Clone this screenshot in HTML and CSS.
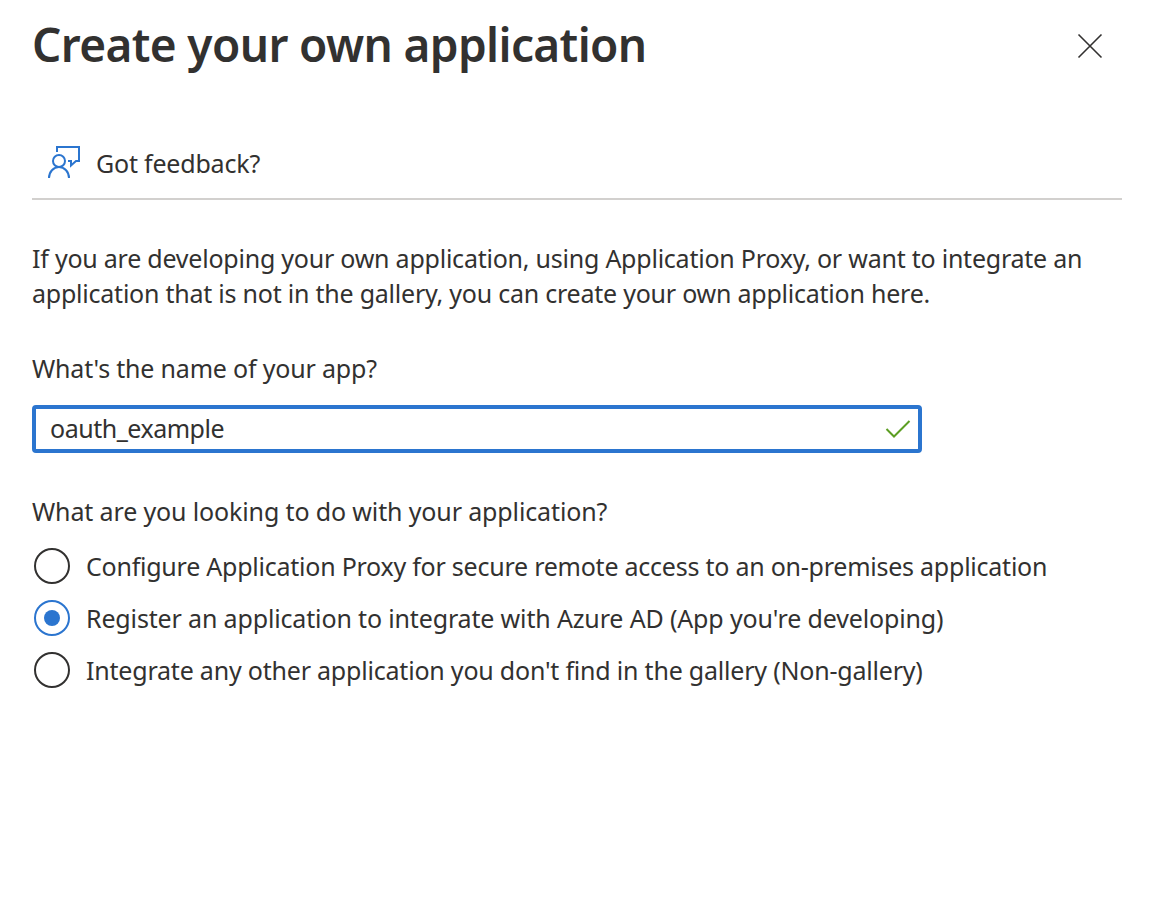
FILE: index.html
```html
<!DOCTYPE html>
<html lang="en">
<head>
<meta charset="utf-8">
<title>Create your own application</title>
<link rel="stylesheet" href="styles.css">
</head>
<body>
<main class="panel">
  <header class="header">
    <h1 class="title">Create your own application</h1>
    <button class="close" aria-label="Close"><svg width="26" height="26" viewBox="0 0 26 26"><path d="M1.500 1.500 24.500 24.500M24.500 1.500 1.500 24.500"/></svg></button>
  </header>
  <div class="toolbar">
    <svg class="feedback-icon" width="34" height="34" viewBox="0 0 34 34"><circle cx="12" cy="15" r="6"/><path d="M2 32a10 11 0 0 1 20 0M10 6V1H32V15H29L24 19.500V15H21"/></svg>
    <span class="feedback">Got feedback?</span>
  </div>
  <p class="intro"><span class="intro-text">If you are developing your own application, using Application Proxy, or want to integrate an<br>application that is not in the gallery, you can create your own application here.</span></p>
  <div class="label"><span class="q-name">What's the name of your app?</span></div>
  <div class="field"><span class="value">oauth_example</span><svg class="check" width="26" height="20" viewBox="0 0 26 20"><path d="M1.500 10 9 17.500 24.500 2"/></svg></div>
  <div class="question"><span class="q-goal">What are you looking to do with your application?</span></div>
  <div class="options">
    <div class="option"><i class="radio"></i><span class="opt-proxy">Configure Application Proxy for secure remote access to an on-premises application</span></div>
    <div class="option"><i class="radio selected"></i><span class="opt-register">Register an application to integrate with Azure AD (App you're developing)</span></div>
    <div class="option"><i class="radio"></i><span class="opt-other">Integrate any other application you don't find in the gallery (Non-gallery)</span></div>
  </div>
</main>
</body>
</html>
```
FILE: styles.css
```css
* { box-sizing: border-box; }
body { margin: 0; background: #fff; color: #323130; font: 25px/36px "Noto Sans", "Open Sans", sans-serif; }
.panel { padding: 16px 40px 0 32px; white-space: nowrap; }
.header { display: flex; justify-content: space-between; height: 60px; padding-right: 18px; }
.title { margin: 0; font-size: 46px; line-height: 56px; font-weight: 600; letter-spacing: -0.63px; }
.close { width: 28px; height: 60px; padding: 0; border: 0; background: none; display: grid; place-items: center; }
.close svg, .feedback-icon, .check { fill: none; stroke: #323130; stroke-width: 1.6; }
.toolbar { display: flex; align-items: center; gap: 15px; height: 72px; margin-top: 52px; padding-left: 15px; border-bottom: 2px solid #d2d0ce; }
.feedback { letter-spacing: -0.2px; }
.toolbar .feedback-icon { stroke: #2b75cf; stroke-width: 2; }
.intro { margin: 41px 0 0; line-height: 35px; }
.intro-text { letter-spacing: -0.23px; }
.label { margin-top: 39px; }
.q-name { letter-spacing: -0.19px; }
.field { display: flex; align-items: center; justify-content: space-between; width: 890px; height: 48px; margin-top: 19px; padding: 0 7px 0 14px; border: 4px solid #2b75cf; border-radius: 4px; }
.value { padding-bottom: 2px; letter-spacing: -0.48px; }
.field .check { stroke: #5c9e23; stroke-width: 2; }
.question { margin-top: 40px; }
.q-goal { letter-spacing: -0.135px; }
.options { margin-top: 11px; }
.option { display: flex; align-items: center; gap: 16px; height: 52px; padding-left: 2px; }
.opt-proxy { letter-spacing: -0.238px; }
.opt-register { letter-spacing: -0.15px; }
.opt-other { letter-spacing: -0.205px; }
.radio { display: grid; place-items: center; width: 36px; height: 36px; border: 2px solid #323130; border-radius: 50%; }
.selected { border-color: #2b75cf; }
.selected::after { content: ""; width: 16px; height: 16px; border-radius: 50%; background: #2b75cf; }
```
